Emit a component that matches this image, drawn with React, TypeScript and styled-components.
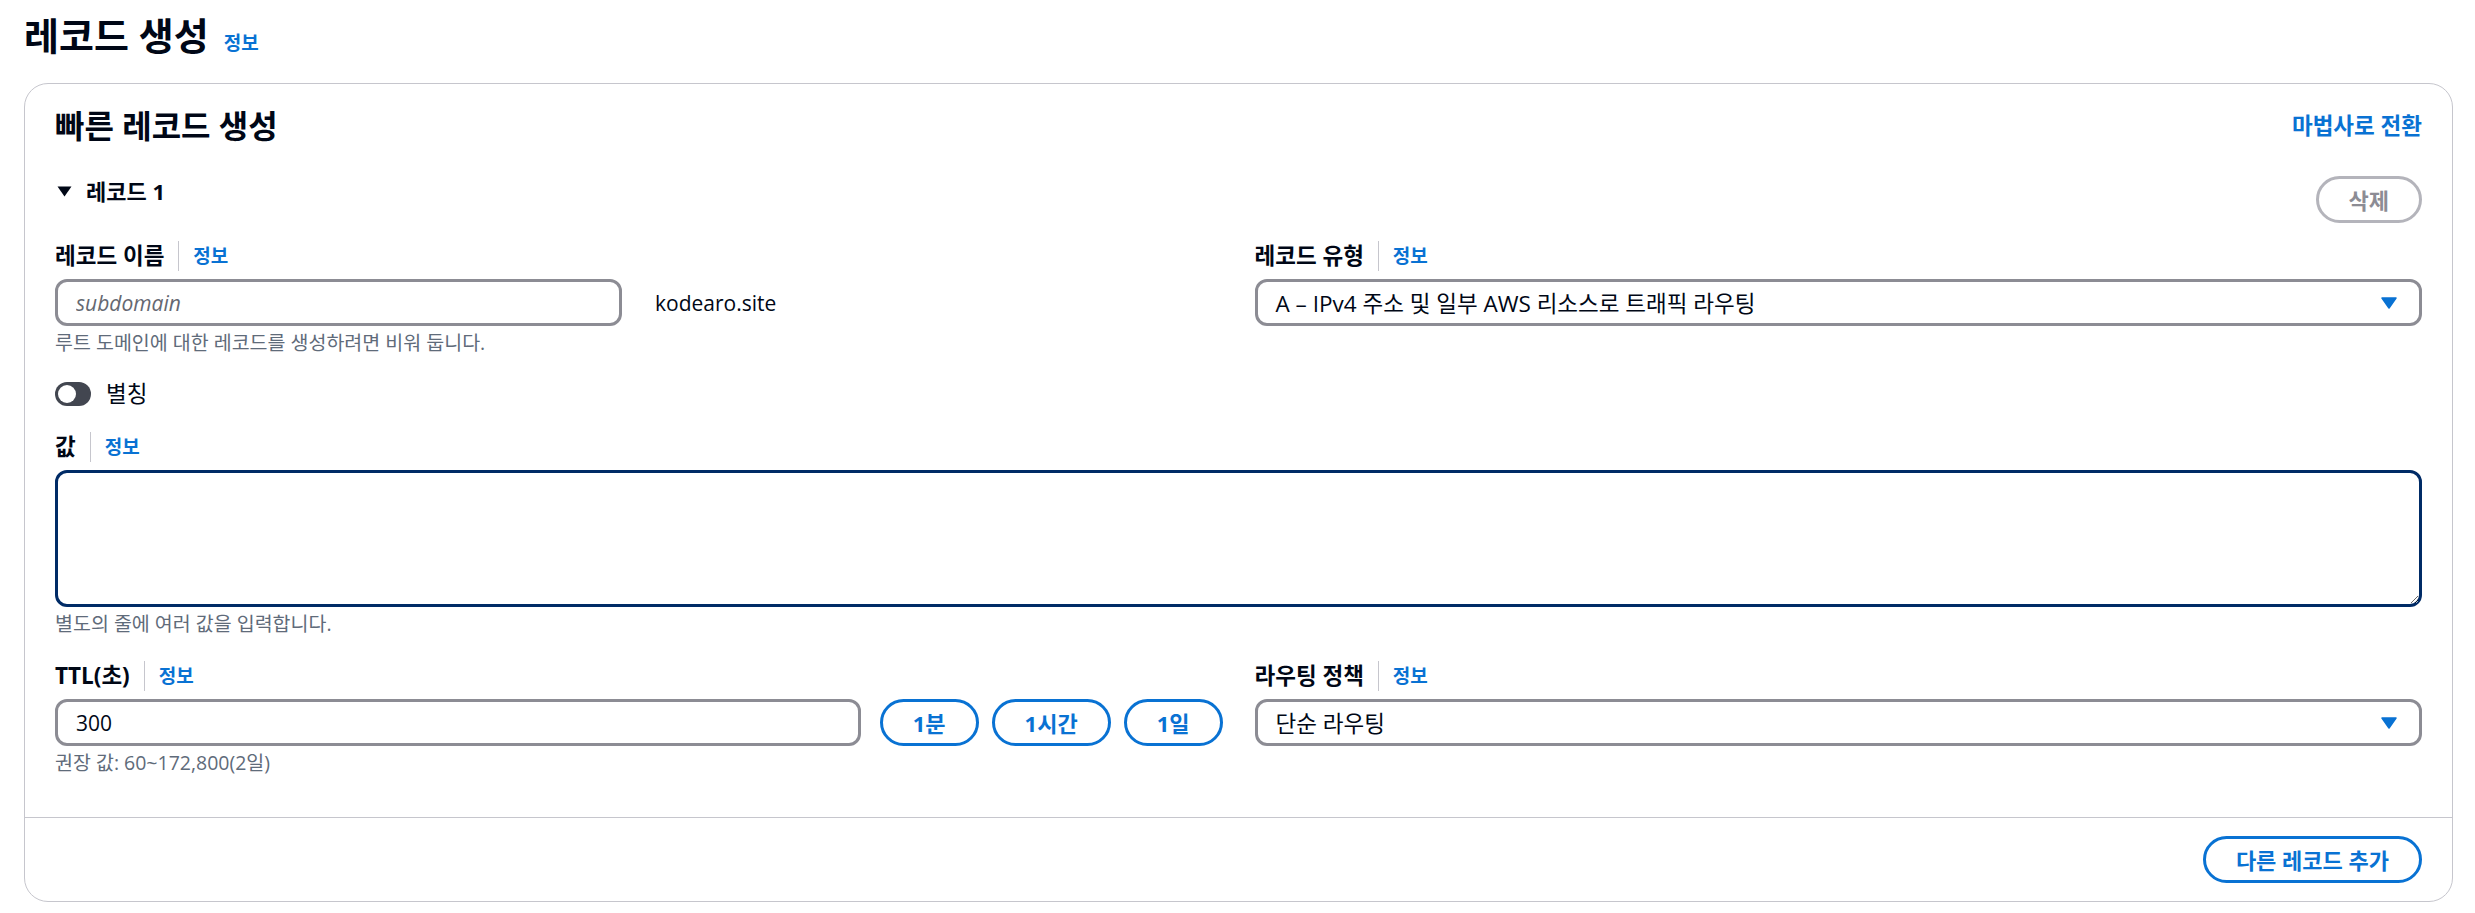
import styled, { createGlobalStyle } from "styled-components";

const GlobalStyle = createGlobalStyle`
  * {
    box-sizing: border-box;
  }
  html,
  body {
    margin: 0;
    padding: 0;
    background: #ffffff;
  }
  body {
    font-family: "Open Sans", "Noto Sans CJK KR", sans-serif;
    color: #000716;
    -webkit-font-smoothing: antialiased;
  }
`;

const Page = styled.div`
  padding: 13px 22px 10px 24px;
`;

const TitleRow = styled.div`
  display: flex;
  align-items: baseline;
  gap: 15px;
  height: 44px;
`;

const H1 = styled.h1`
  margin: 0;
  font-size: 38px;
  line-height: 44px;
  font-weight: 700;
`;

const Info = styled.a`
  font-size: 19px;
  line-height: 30px;
  font-weight: 700;
  color: #0972d3;
  text-decoration: none;
  cursor: pointer;
`;

const Card = styled.section`
  margin-top: 26px;
  border: 1px solid #c6c6cd;
  border-radius: 24px;
  background: #ffffff;
`;

const CardHeader = styled.div`
  display: flex;
  justify-content: space-between;
  align-items: center;
  padding: 22px 30px 0;
`;

const H2 = styled.h2`
  margin: 0;
  font-size: 32px;
  line-height: 40px;
  font-weight: 700;
`;

const HeaderLink = styled.a`
  font-size: 22.5px;
  line-height: 30px;
  font-weight: 700;
  color: #0972d3;
  text-decoration: none;
  cursor: pointer;
`;

const CardBody = styled.div`
  display: flex;
  flex-direction: column;
  padding: 30px 30px 41px;
`;

const RecordHeader = styled.div`
  display: flex;
  justify-content: space-between;
  align-items: flex-start;
`;

const Expander = styled.div`
  display: flex;
  align-items: center;
  gap: 14px;
  padding-left: 2px;
  font-size: 22px;
  line-height: 30px;
  font-weight: 700;
`;

const Block = styled.div<{ $top: number }>`
  margin-top: ${(p) => p.$top}px;
`;

const Columns = styled(Block)`
  display: grid;
  grid-template-columns: 1fr 1fr;
  column-gap: 32px;
`;

const Field = styled.div`
  display: flex;
  flex-direction: column;
  min-width: 0;
`;

const LabelRow = styled.div`
  display: flex;
  align-items: center;
  height: 30px;
  margin-bottom: 8px;
`;

const LabelText = styled.span`
  font-size: 22.5px;
  line-height: 30px;
  font-weight: 700;
`;

const LabelDivider = styled.span`
  width: 1px;
  height: 30px;
  margin: 0 14px;
  background: #c6c6cd;
`;

const Help = styled.div`
  margin-top: 3px;
  font-size: 19.5px;
  line-height: 27px;
  color: #5f6b7a;
`;

const ControlRow = styled.div<{ $gap: number }>`
  display: flex;
  align-items: center;
  gap: ${(p) => p.$gap}px;
`;

const TextInput = styled.input<{ $width?: number }>`
  ${(p) => (p.$width ? `width: ${p.$width}px;` : "flex: 1; min-width: 0;")}
  height: 47px;
  padding: 0 18px;
  border: 3px solid #8c8c94;
  border-radius: 12px;
  background: #ffffff;
  font-family: inherit;
  font-size: 21px;
  color: #000716;
  outline: none;

  &::placeholder {
    color: #656871;
    font-style: italic;
  }
`;

const Suffix = styled.span`
  font-size: 21px;
  line-height: 30px;
`;

const FakeSelect = styled.div`
  display: flex;
  align-items: center;
  justify-content: space-between;
  height: 47px;
  padding: 0 22px 0 18px;
  border: 3px solid #8c8c94;
  border-radius: 12px;
  background: #ffffff;
  font-size: 22.5px;
  cursor: pointer;
`;

const ValueArea = styled.textarea`
  display: block;
  width: 100%;
  height: 137px;
  padding: 10px 18px;
  border: 3px solid #002b66;
  border-radius: 12px;
  font-family: inherit;
  font-size: 21px;
  color: #000716;
  resize: vertical;
  outline: none;
`;

const ButtonGroup = styled.div`
  display: flex;
  gap: 13px;
`;

const PillButton = styled.button<{ $disabled?: boolean }>`
  height: 47px;
  padding: 0 30px;
  border: 3px solid ${(p) => (p.$disabled ? "#b4b4bb" : "#0972d3")};
  border-radius: 999px;
  background: #ffffff;
  color: ${(p) => (p.$disabled ? "#8c8c94" : "#0972d3")};
  font-family: inherit;
  font-size: 22px;
  font-weight: 700;
  line-height: 30px;
  white-space: nowrap;
  cursor: ${(p) => (p.$disabled ? "default" : "pointer")};
`;

const ToggleRow = styled(Block)`
  display: flex;
  align-items: center;
  gap: 15px;
  height: 30px;
`;

const ToggleTrack = styled.span`
  display: inline-flex;
  align-items: center;
  width: 36px;
  height: 24px;
  padding: 0 3px;
  border-radius: 12px;
  background: #424650;
`;

const ToggleKnob = styled.span`
  width: 18px;
  height: 18px;
  border-radius: 50%;
  background: #ffffff;
`;

const ToggleLabel = styled.span`
  font-size: 22.5px;
  line-height: 30px;
`;

const CardFooter = styled.div`
  display: flex;
  justify-content: flex-end;
  padding: 18px 30px;
  border-top: 1px solid #c6c6cd;
`;

const Caret = () => (
  <svg width="16" height="12" viewBox="0 0 16 12" aria-hidden>
    <path d="M1 1h14L8 11z" fill="#0972d3" stroke="#0972d3" strokeWidth="1.5" strokeLinejoin="round" />
  </svg>
);

const ExpandIcon = () => (
  <svg width="15" height="11" viewBox="0 0 15 11" aria-hidden>
    <path d="M0.5 0.5h14L7.5 10.5z" fill="#000716" />
  </svg>
);

const Label = ({ text }: { text: string }) => (
  <LabelRow>
    <LabelText>{text}</LabelText>
    <LabelDivider />
    <Info>정보</Info>
  </LabelRow>
);

export default function App() {
  return (
    <>
      <GlobalStyle />
      <Page>
        <TitleRow>
          <H1>레코드 생성</H1>
          <Info>정보</Info>
        </TitleRow>

        <Card>
          <CardHeader>
            <H2>빠른 레코드 생성</H2>
            <HeaderLink>마법사로 전환</HeaderLink>
          </CardHeader>

          <CardBody>
            <RecordHeader>
              <Expander>
                <ExpandIcon />
                레코드 1
              </Expander>
              <PillButton $disabled>삭제</PillButton>
            </RecordHeader>

            <Columns $top={18}>
              <Field>
                <Label text="레코드 이름" />
                <ControlRow $gap={33}>
                  <TextInput $width={567} placeholder="subdomain" />
                  <Suffix>kodearo.site</Suffix>
                </ControlRow>
                <Help>루트 도메인에 대한 레코드를 생성하려면 비워 둡니다.</Help>
              </Field>
              <Field>
                <Label text="레코드 유형" />
                <FakeSelect>
                  <span>A – IPv4 주소 및 일부 AWS 리소스로 트래픽 라우팅</span>
                  <Caret />
                </FakeSelect>
              </Field>
            </Columns>

            <ToggleRow $top={23}>
              <ToggleTrack>
                <ToggleKnob />
              </ToggleTrack>
              <ToggleLabel>별칭</ToggleLabel>
            </ToggleRow>

            <Block $top={23}>
              <Field>
                <Label text="값" />
                <ValueArea />
                <Help>별도의 줄에 여러 값을 입력합니다.</Help>
              </Field>
            </Block>

            <Columns $top={24}>
              <Field>
                <Label text="TTL(초)" />
                <ControlRow $gap={19}>
                  <TextInput defaultValue="300" />
                  <ButtonGroup>
                    <PillButton>1분</PillButton>
                    <PillButton>1시간</PillButton>
                    <PillButton>1일</PillButton>
                  </ButtonGroup>
                </ControlRow>
                <Help>권장 값: 60~172,800(2일)</Help>
              </Field>
              <Field>
                <Label text="라우팅 정책" />
                <FakeSelect>
                  <span>단순 라우팅</span>
                  <Caret />
                </FakeSelect>
              </Field>
            </Columns>
          </CardBody>

          <CardFooter>
            <PillButton>다른 레코드 추가</PillButton>
          </CardFooter>
        </Card>
      </Page>
    </>
  );
}
